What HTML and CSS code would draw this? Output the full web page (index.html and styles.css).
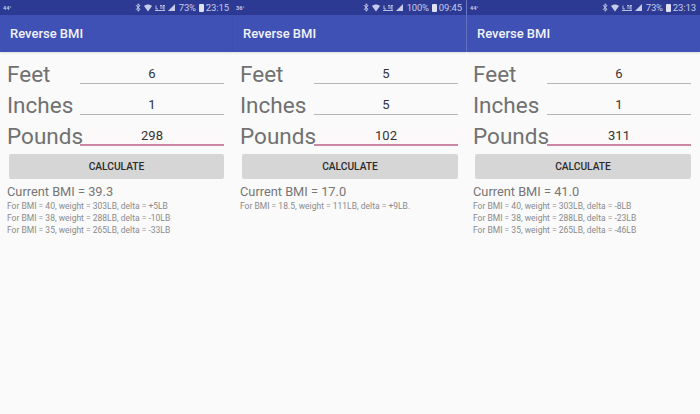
FILE: index.html
```html
<!DOCTYPE html>
<html lang="en">
<head>
<meta charset="utf-8">
<title>Reverse BMI</title>
<link rel="stylesheet" href="styles.css">
</head>
<body>
<svg class="defs" width="0" height="0" aria-hidden="true">
  <defs>
    <symbol id="bt" viewBox="0 0 6 9"><path d="M1 2.2 5 6.4 3 8.2V.8L5 2.6 1 6.8" fill="none" stroke="currentColor" stroke-width="1"/></symbol>
    <symbol id="wifi" viewBox="0 0 8 8"><path d="M0 2C2.4 0 5.6 0 8 2L4 7.6Z" fill="currentColor"/></symbol>
    <symbol id="lte" viewBox="0 0 10 6"><path d="M0 5.5H10M1 .5V4H3M5 .5H7M6 .5V4M8 .5H10M8 .5V4H10M8 2H10" fill="none" stroke="currentColor" stroke-width=".9"/></symbol>
    <symbol id="sig" viewBox="0 0 8 8"><path d="M8 0V8H0Z" fill="currentColor"/></symbol>
  </defs>
</svg>
<main class="screens">
  <section class="phone">
    <div class="status"><span class="temp">44°</span><span class="icons"><svg class="i-bt"><use href="#bt"/></svg><svg class="i-wifi"><use href="#wifi"/></svg><svg class="i-lte"><use href="#lte"/></svg><svg class="i-sig"><use href="#sig"/></svg></span><span class="pct">73%</span><span class="batt"></span><span class="clock">23:15</span></div>
    <header class="appbar">Reverse BMI</header>
    <div class="row"><span class="label">Feet</span><span class="field">6</span></div>
    <div class="row"><span class="label">Inches</span><span class="field">1</span></div>
    <div class="row"><span class="label">Pounds</span><span class="field active">298</span></div>
    <button class="calc">CALCULATE</button>
    <p class="bmi">Current BMI = 39.3</p>
    <p class="line">For BMI = 40, weight = 303LB, delta = +5LB</p>
    <p class="line">For BMI = 38, weight = 288LB, delta = -10LB</p>
    <p class="line">For BMI = 35, weight = 265LB, delta = -33LB</p>
  </section>
  <section class="phone divided">
    <div class="status"><span class="temp">36°</span><span class="icons"><svg class="i-bt"><use href="#bt"/></svg><svg class="i-wifi"><use href="#wifi"/></svg><svg class="i-lte"><use href="#lte"/></svg><svg class="i-sig"><use href="#sig"/></svg></span><span class="pct">100%</span><span class="batt"></span><span class="clock">09:45</span></div>
    <header class="appbar">Reverse BMI</header>
    <div class="row"><span class="label">Feet</span><span class="field">5</span></div>
    <div class="row"><span class="label">Inches</span><span class="field">5</span></div>
    <div class="row"><span class="label">Pounds</span><span class="field active">102</span></div>
    <button class="calc">CALCULATE</button>
    <p class="bmi">Current BMI = 17.0</p>
    <p class="line">For BMI = 18.5, weight = 111LB, delta = +9LB.</p>
  </section>
  <section class="phone shifted">
    <div class="status"><span class="temp">44°</span><span class="icons"><svg class="i-bt"><use href="#bt"/></svg><svg class="i-wifi"><use href="#wifi"/></svg><svg class="i-lte"><use href="#lte"/></svg><svg class="i-sig"><use href="#sig"/></svg></span><span class="pct">73%</span><span class="batt"></span><span class="clock">23:13</span></div>
    <header class="appbar">Reverse BMI</header>
    <div class="row"><span class="label">Feet</span><span class="field">6</span></div>
    <div class="row"><span class="label">Inches</span><span class="field">1</span></div>
    <div class="row"><span class="label">Pounds</span><span class="field active">311</span></div>
    <button class="calc">CALCULATE</button>
    <p class="bmi">Current BMI = 41.0</p>
    <p class="line">For BMI = 40, weight = 303LB, delta = -8LB</p>
    <p class="line">For BMI = 38, weight = 288LB, delta = -23LB</p>
    <p class="line">For BMI = 35, weight = 265LB, delta = -46LB</p>
  </section>
</main>
</body>
</html>
```
FILE: styles.css
```css
* { box-sizing: border-box; }
html, body { margin: 0; padding: 0; height: 100%; }
body { background: #fafafa; font-family: Roboto, sans-serif; overflow: hidden; }
.defs { position: absolute; }
.screens { display: grid; grid-template-columns: 233px 234px 233px; width: 700px; height: 414px; }
.phone { display: flex; flex-direction: column; min-width: 0; background: #fafafa; }
.status { height: 15px; background: #2d3a94; color: #c5cbe8; display: flex; align-items: center; padding: 0 4px 0 3px; font-size: 9.5px; }
.divided .status, .divided .appbar { border-right: 1px solid #6a78c4; }
.temp { font-size: 5.5px; font-weight: 700; }
.icons { margin-left: auto; display: flex; align-items: center; gap: 3px; }
.icons svg { display: block; }
.i-bt { width: 6px; height: 9px; }
.i-wifi { width: 8px; height: 8px; }
.i-lte { width: 10px; height: 6px; }
.i-sig { width: 7px; height: 7px; }
.pct { margin-left: 4px; letter-spacing: -.2px; }
.batt { width: 5px; height: 8px; margin: 0 2px 0 3px; background: #dfe2f2; border-radius: 1px; }
.clock { letter-spacing: -.1px; }
.appbar { height: 37px; background: #3f51b5; color: #f1f2fa; font-size: 13px; font-weight: 500; display: flex; align-items: center; padding-left: 10px; box-shadow: 0 1px 2px rgba(0,0,0,.12); }
.row { height: 31px; display: flex; align-items: flex-end; padding: 0 9px 0 7px; }
.appbar + .row { height: 32px; }
.label { width: 73px; font-size: 22.5px; line-height: 20px; color: #717171; flex: none; position: relative; z-index: 1; white-space: nowrap; }
.field { flex: 1; height: 24px; text-align: center; font-size: 13px; line-height: 27px; color: #333; border-bottom: 1px solid #b5b5b5; }
.active { border-bottom: 2px solid #cc86a6; background: linear-gradient(#fafafa, #fdf8f9); }
.calc { margin: 8px 9px 0; height: 25px; border: 0; border-radius: 2px; background: #d6d6d6; color: #2b2b2b; font: 500 10.2px Roboto, sans-serif; padding: 0; }
.bmi { margin: 5px 0 0 7px; font-size: 12.8px; line-height: 15px; color: #767676; }
.line { margin: 0 0 0 7px; font-size: 8.5px; line-height: 12px; color: #8a8a8a; white-space: nowrap; }
.bmi + .line { margin-top: 1px; }
.divided .label { width: 74px; }
.shifted .row { padding-left: 6px; }
.shifted .label { width: 74px; }
.shifted .calc { margin-left: 8px; }
.shifted .bmi, .shifted .line { margin-left: 6px; }
```
